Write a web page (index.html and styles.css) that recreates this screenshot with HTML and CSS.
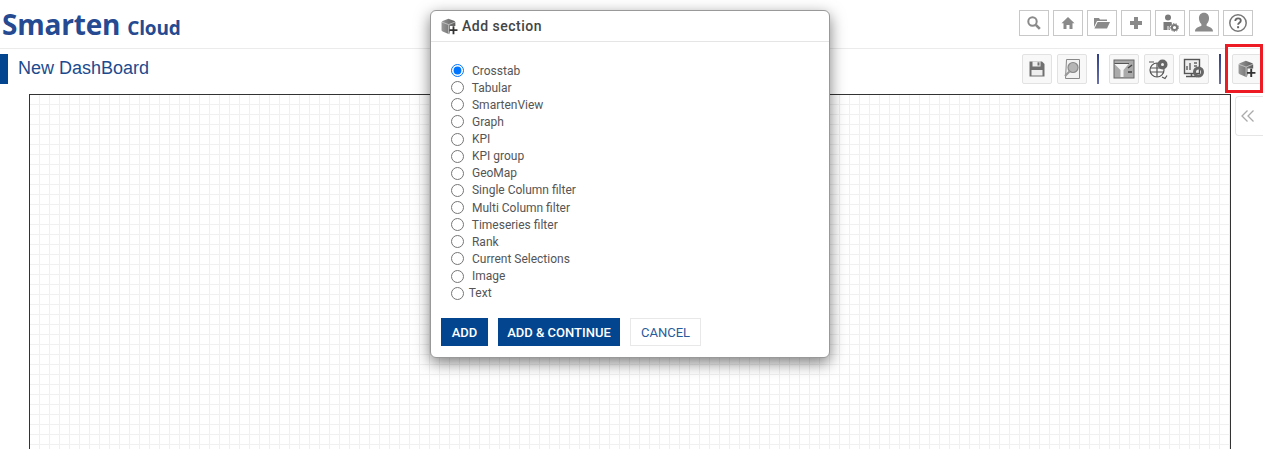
FILE: index.html
```html
<!DOCTYPE html>
<html lang="en">
<head>
    <meta charset="UTF-8">
    <meta name="viewport" content="width=device-width, initial-scale=1.0">
    <title>Smarten Cloud - New DashBoard</title>
    <link rel="stylesheet" href="styles.css">
</head>
<body>

<svg class="icon-defs" width="0" height="0">
    <defs>
        <linearGradient id="cube-side" x1="0" y1="0" x2="1" y2="0">
            <stop offset="0" stop-color="#999"/>
            <stop offset="1" stop-color="#5c5c5c"/>
        </linearGradient>
    </defs>
    <symbol id="icon-section" viewBox="0 0 16 16">
        <path d="M7 .6l5.800 2.300.7 1v3.600H8.500v5.500l-.8 2.400-6.200-2.700-1-1V3.900l1-1z" fill="url(#cube-side)"/>
        <path d="M.8 3.900l6.400 2.300 6-2.400M7.200 6.200v8.800" fill="none" stroke="#d0d0d0" stroke-width=".7"/>
        <path d="M10.900 7.800h1.700v2.800h2.900v1.700h-2.900v2.900h-1.700v-2.900H8v-1.700h2.900z" fill="#333"/>
    </symbol>
</svg>

<!-- Top header -->
<header class="top-bar">
    <div class="logo">Smarten <span class="logo-sub">Cloud</span></div>
    <div class="top-actions">
        <button class="top-btn">
            <svg width="16" height="16" viewBox="0 0 16 16"><circle cx="6.500" cy="6.500" r="4.200" fill="none" stroke="#8a8a8a" stroke-width="2"/><path d="M9.800 9.800l4 4" stroke="#8a8a8a" stroke-width="2.600"/></svg>
        </button>
        <button class="top-btn">
            <svg width="16" height="16" viewBox="0 0 16 16"><path d="M8 2L1.500 8.200h2V14h3v-4h3v4h3V8.200h2z" fill="#8a8a8a"/></svg>
        </button>
        <button class="top-btn">
            <svg width="18" height="16" viewBox="0 0 18 16"><path d="M1 3h5l1 1.500h7V6H4L1 12z" fill="#8a8a8a"/><path d="M4.600 7H17l-3 6.500H1.400z" fill="#8a8a8a"/></svg>
        </button>
        <button class="top-btn">
            <svg width="14" height="14" viewBox="0 0 14 14"><path d="M5 1h4v4h4v4H9v4H5V9H1V5h4z" fill="#8a8a8a"/></svg>
        </button>
        <button class="top-btn">
            <svg width="20" height="20" viewBox="0 0 20 20"><circle cx="8" cy="4.500" r="3" fill="#7a7a7a"/><path d="M3.500 9h8l.5 2.500a4 4 0 0 0-2 5.500H8.500v-4h-1v4H3.500z" fill="#7a7a7a"/><circle cx="14.500" cy="14.500" r="2.600" fill="none" stroke="#7a7a7a" stroke-width="2"/><circle cx="14.500" cy="14.500" r="4" fill="none" stroke="#7a7a7a" stroke-width="1" stroke-dasharray="1.400 1.400"/></svg>
        </button>
        <button class="top-btn">
            <svg width="24" height="24" viewBox="0 0 20 20"><path d="M10 1.500c2.800 0 4.200 2 4.200 4.600 0 2-.8 3.800-2 4.800v1.600c2.600.8 5.300 1.600 5.300 4.500h-15c0-2.900 2.700-3.700 5.300-4.500v-1.600c-1.200-1-2-2.800-2-4.800 0-2.600 1.400-4.600 4.200-4.600z" fill="#8a8a8a"/></svg>
        </button>
        <button class="top-btn">
            <svg width="20" height="20" viewBox="0 0 20 20"><circle cx="10" cy="10" r="8.200" fill="none" stroke="#777" stroke-width="1.500"/><path d="M7.300 8c0-1.700 1.200-2.600 2.800-2.600s2.700.9 2.700 2.300c0 2-2.700 2-2.700 4" fill="none" stroke="#666" stroke-width="1.800"/><rect x="9.100" y="13.200" width="2" height="2" fill="#666"/></svg>
        </button>
    </div>
</header>

<!-- Title row -->
<div class="title-row">
    <h1 class="page-title">New DashBoard</h1>
    <div class="tools">
        <button class="tool-btn">
            <svg width="18" height="18" viewBox="0 0 18 18"><path d="M1.500 1.500h12.500l2.500 2.500v12.500h-15z" fill="#707070"/><rect x="4.500" y="1.500" width="8" height="5" fill="#eee"/><rect x="9.500" y="2.300" width="2" height="3.200" fill="#707070"/><rect x="3.500" y="10" width="11" height="5.500" fill="#eee"/></svg>
        </button>
        <button class="tool-btn">
            <svg width="20" height="22" viewBox="0 0 20 22"><path d="M4.500 1.500h13v19h-14z" fill="#f2f2f2" stroke="#888" stroke-width="1"/><circle cx="11" cy="9.500" r="5" fill="#b5b5b5" stroke="#888" stroke-width="1.200"/><path d="M7.500 13.500l-4.500 4.500" stroke="#999" stroke-width="2.200"/></svg>
        </button>
        <span class="tool-sep"></span>
        <button class="tool-btn">
            <svg width="22" height="20" viewBox="0 0 22 20"><rect x="1" y="1" width="20" height="18" fill="#aaa" stroke="#666" stroke-width="1"/><path d="M1.500 5h14l-5 6v7h-3v-7z" fill="#f4f4f4"/><path d="M1.500 4.500h14.500" stroke="#555" stroke-width="1"/><path d="M15 9l4-3M15 13h4" stroke="#444" stroke-width="1.500"/></svg>
        </button>
        <button class="tool-btn">
            <svg width="22" height="22" viewBox="0 0 22 22"><circle cx="9" cy="12" r="7" fill="none" stroke="#555" stroke-width="1.200"/><path d="M2 10h14M2 14h14M9 5v14" stroke="#555" stroke-width="1.200"/><circle cx="14.500" cy="6.500" r="5" fill="#666"/><circle cx="14.500" cy="6.500" r="1.500" fill="#eee"/><path d="M1 4h5M14 19l3 1.500 2-3" fill="none" stroke="#555" stroke-width="1.200"/></svg>
        </button>
        <button class="tool-btn">
            <svg width="22" height="22" viewBox="0 0 22 22"><rect x="1.500" y="1.500" width="15" height="14" fill="#eee" stroke="#555" stroke-width="1.400"/><path d="M4 12V8M7 12V5M11 5h3M11 8h3" stroke="#666" stroke-width="1.500"/><path d="M3 18.500h11M8.500 15.500v3" stroke="#555" stroke-width="1.600"/><circle cx="15.500" cy="14" r="4" fill="none" stroke="#666" stroke-width="3"/></svg>
        </button>
        <span class="tool-sep"></span>
        <button class="tool-btn tool-btn-active">
            <svg width="18" height="18"><use href="#icon-section"/></svg>
        </button>
    </div>
    <div class="highlight-box"></div>
</div>

<!-- Canvas and side tab -->
<div class="workspace">
    <div class="canvas"></div>
    <button class="side-tab">
        <svg width="14" height="14" viewBox="0 0 14 14"><path d="M6.500 1.500L1 7l5.500 5.500M12.500 1.500L7 7l5.500 5.500" fill="none" stroke="#aaa" stroke-width="1.300"/></svg>
    </button>
</div>

<!-- Add section dialog -->
<div class="dialog">
    <div class="dialog-header">
        <svg width="17" height="17"><use href="#icon-section"/></svg>
        <span>Add section</span>
    </div>
    <div class="dialog-body">
        <label class="option"><input type="radio" name="section" checked> Crosstab</label>
        <label class="option"><input type="radio" name="section"> Tabular</label>
        <label class="option"><input type="radio" name="section"> SmartenView</label>
        <label class="option"><input type="radio" name="section"> Graph</label>
        <label class="option"><input type="radio" name="section"> KPI</label>
        <label class="option"><input type="radio" name="section"> KPI group</label>
        <label class="option"><input type="radio" name="section"> GeoMap</label>
        <label class="option"><input type="radio" name="section"> Single Column filter</label>
        <label class="option"><input type="radio" name="section"> Multi Column filter</label>
        <label class="option"><input type="radio" name="section"> Timeseries filter</label>
        <label class="option"><input type="radio" name="section"> Rank</label>
        <label class="option"><input type="radio" name="section"> Current Selections</label>
        <label class="option"><input type="radio" name="section"> Image</label>
        <label class="option option-tight"><input type="radio" name="section"> Text</label>
    </div>
    <div class="dialog-footer">
        <button class="btn btn-primary btn-add">ADD</button>
        <button class="btn btn-primary btn-continue">ADD &amp; CONTINUE</button>
        <button class="btn btn-cancel">CANCEL</button>
    </div>
</div>

</body>
</html>
```

FILE: styles.css
```css
/* Basic Reset */
* {
    margin: 0;
    padding: 0;
    box-sizing: border-box;
}

html,
body {
    height: 449px;
    overflow: hidden;
}

body {
    font-family: Roboto, "Liberation Sans", sans-serif;
    background-color: #fff;
    color: #555;
    position: relative;
}

button {
    font-family: inherit;
    cursor: pointer;
}

.icon-defs {
    position: absolute;
}

/* Header */
.top-bar {
    height: 49px;
    border-bottom: 1px solid #ebebeb;
    display: flex;
    justify-content: space-between;
    padding: 10px 10px 0 2px;
}

.logo {
    font-family: "Open Sans", sans-serif;
    font-weight: 700;
    font-size: 28px;
    line-height: 30px;
    color: #254a91;
    letter-spacing: -0.2px;
    margin-top: -1px;
}

.logo-sub {
    font-size: 19px;
    letter-spacing: -0.2px;
}

.top-actions {
    display: flex;
    gap: 4px;
}

.top-btn {
    width: 30px;
    height: 26px;
    background-color: #fff;
    border: 1px solid #c8c8c8;
    display: flex;
    align-items: center;
    justify-content: center;
}

/* Title row */
.title-row {
    height: 45px;
    padding-top: 5px;
    display: flex;
    justify-content: space-between;
    align-items: flex-start;
    position: relative;
}

.page-title {
    font-family: "Liberation Sans", sans-serif;
    font-weight: 400;
    font-size: 18px;
    line-height: 28px;
    height: 30px;
    color: #1b4b8e;
    border-left: 8px solid #03468f;
    padding-left: 10px;
}

.tools {
    display: flex;
    align-items: center;
    margin-right: 1px;
}

.tool-btn {
    width: 30px;
    height: 30px;
    background-color: #f8f8f8;
    border: 1px solid #e2e2e2;
    border-radius: 2px;
    display: flex;
    align-items: center;
    justify-content: center;
    margin-right: 5px;
}

.tool-sep {
    width: 2px;
    height: 30px;
    margin: 0 10px 0 5px;
    background: linear-gradient(#2e3f86, #6a72a8);
}

.tool-btn-active {
    margin-right: 0;
    margin-left: 1px;
}

.highlight-box {
    position: absolute;
    right: 0;
    top: -5px;
    width: 38px;
    height: 49px;
    border: 3px solid #ed1c24;
}

/* Workspace */
.workspace {
    display: flex;
    align-items: flex-start;
    padding-left: 29px;
}

.canvas {
    width: 1202px;
    height: 355px;
    border: 1px solid #333;
    border-bottom: none;
    background-color: #fff;
    background-image:
        linear-gradient(#f0f0f0 1px, transparent 1px),
        linear-gradient(90deg, #f0f0f0 1px, transparent 1px);
    background-size: 10px 10px;
    background-position: 9px 9px;
}

.side-tab {
    width: 28px;
    height: 40px;
    margin: 2px 0 0 4px;
    padding-right: 4px;
    background-color: #fff;
    border: 1px solid #e5e5e5;
    border-right: none;
    border-radius: 4px 0 0 4px;
    display: flex;
    align-items: center;
    justify-content: center;
}

/* Dialog */
.dialog {
    position: absolute;
    left: 430px;
    top: 10px;
    width: 400px;
    height: 348px;
    background-color: #fff;
    border: 1px solid #999;
    border-radius: 6px;
    box-shadow: 0 5px 15px rgba(0, 0, 0, 0.5);
}

.dialog-header {
    height: 31px;
    border-bottom: 1px solid #e5e5e5;
    display: flex;
    align-items: center;
    gap: 4px;
    padding: 0 0 0 10px;
    font-size: 14px;
    font-weight: 500;
    letter-spacing: 0.5px;
    color: #444;
}

.dialog-body {
    padding: 20px 0 0 19px;
}

.option {
    display: flex;
    align-items: center;
    height: 17.13px;
    font-size: 12px;
    color: #555;
    white-space: pre;
}

.option input {
    width: 13px;
    height: 13px;
    margin: 0 5px 0 1px;
}

.option-tight input {
    margin-right: 2px;
}

.dialog-footer {
    display: flex;
    gap: 10px;
    padding: 16.6px 0 0 10px;
}

.btn {
    height: 28px;
    font-size: 13px;
    font-weight: 500;
    border: 1px solid #e8e8e8;
}

.btn-primary {
    background-color: #03468f;
    border-color: #03468f;
    color: #fff;
}

.btn-add {
    width: 47px;
}

.btn-continue {
    width: 122px;
}

.btn-cancel {
    width: 71px;
    background-color: #fff;
    color: #2a5a9c;
    font-weight: 400;
}
```
